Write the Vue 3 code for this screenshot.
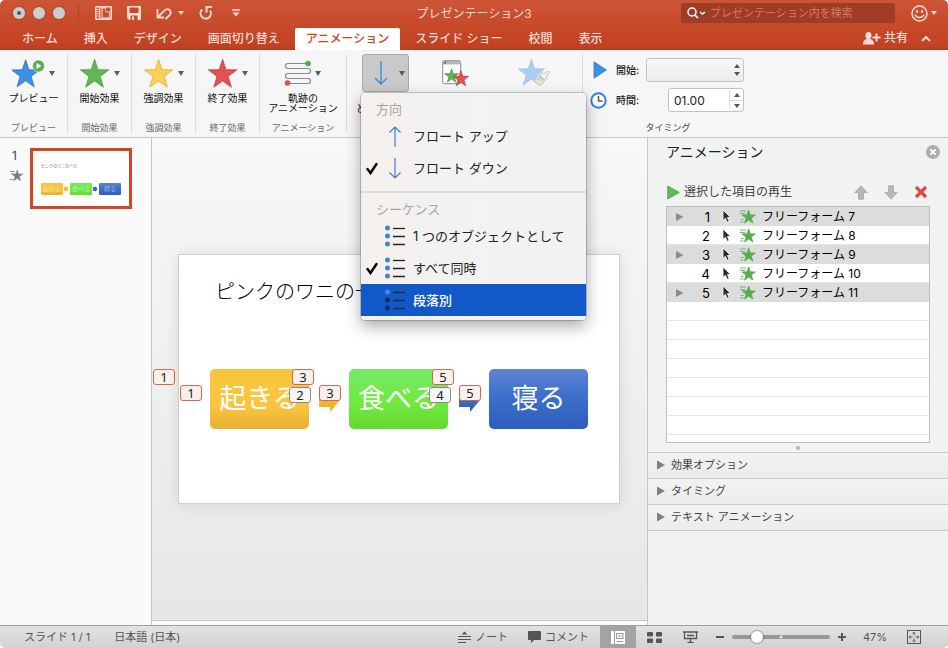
<script setup>
import { ref } from 'vue'

const star = '12,1 14.6,9 23,9.1 16.3,14.2 18.8,22.5 12,17.6 5.2,22.5 7.7,14.2 1,9.1 9.4,9'

const tabs = ['ホーム', '挿入', 'デザイン', '画面切り替え', 'アニメーション', 'スライド ショー', '校閲', '表示']
const activeTab = ref('アニメーション')

const effects = [
  { label: '開始効果', fill: '#62b657', edge: '#4a9c40' },
  { label: '強調効果', fill: '#fbd154', edge: '#e5b02f' },
  { label: '終了効果', fill: '#e35152', edge: '#c23c3e' },
]

const directions = [
  { label: 'フロート アップ', checked: false, d: 'M10 22V2M4.500 7.500 10 2l5.500 5.500' },
  { label: 'フロート ダウン', checked: true, d: 'M10 1v20M4.500 15.500 10 21l5.500-5.500' },
]
const sequences = [
  { label: '1 つのオブジェクトとして', checked: false },
  { label: 'すべて同時', checked: true },
  { label: '段落別', checked: false, active: true },
]

const animations = [
  { order: 1, name: 'フリーフォーム 7', group: true },
  { order: 2, name: 'フリーフォーム 8', group: false },
  { order: 3, name: 'フリーフォーム 9', group: true },
  { order: 4, name: 'フリーフォーム 10', group: false },
  { order: 5, name: 'フリーフォーム 11', group: true },
]

const sections = ['効果オプション', 'タイミング', 'テキスト アニメーション']

const shapes = [
  { text: '起きる', kind: 'gold', x: 31 },
  { text: '食べる', kind: 'green', x: 170 },
  { text: '寝る', kind: 'blue', x: 310 },
]
const connectors = [
  { kind: 'gold', x: 140, from: '#fcc83f', to: '#e5ae2e' },
  { kind: 'blue', x: 280, from: '#5a83d0', to: '#2a5cb8' },
]
const badges = [
  { n: 1, x: -26, y: 114 },
  { n: 1, x: 1, y: 130 },
  { n: 3, x: 113, y: 114 },
  { n: 2, x: 110, y: 132, plain: true },
  { n: 3, x: 140, y: 130 },
  { n: 5, x: 253, y: 114 },
  { n: 4, x: 250, y: 132, plain: true },
  { n: 5, x: 280, y: 130 },
]

const duration = ref('01.00')
const zoom = ref(22)
</script>

<template>
  <div class="window">
    <header class="titlebar">
      <div class="title-row">
        <div class="title-left">
          <div class="lights">
            <span class="light edited"></span><span class="light"></span><span class="light"></span>
          </div>
          <span class="title-rule"></span>
          <div class="quick">
            <button class="bare" aria-label="テーマ">
              <svg width="17" height="14" viewBox="0 0 17 14"><rect x=".8" y=".8" width="15.400" height="12.400" rx=".6" fill="none" stroke="#fbdcd3" stroke-width="1.600" /><path d="M4.800 1v12" stroke="#fbdcd3" stroke-width="1.200" /><path d="M2 3.500h1.800M2 5.700h1.800M2 7.900h1.800M2 10.100h1.800" stroke="#fbdcd3" /><path d="M6.500 1h4.500v4.500h4V13H6.500z" fill="#fbdcd3" /><path d="M7.500 2.500h3v3.800h3.800v5.200H7.500z" fill="#c8502f" /><path d="M11.800 2l2.700 2.800h-2.700z" fill="#c8502f" /></svg>
            </button>
            <button class="bare" aria-label="保存">
              <svg width="14" height="14" viewBox="0 0 14 14"><path d="M0 1q0-1 1-1h12q1 0 1 1v12q0 1-1 1H2l-2-2z" fill="#fbdcd3" /><path d="M2.500 1.500h9V7h-9z" fill="#c54a2b" /><path d="M3.500 9.500h7V14h-7z" fill="#c54a2b" /><path d="M5 10.500h2V14H5z" fill="#fbdcd3" /></svg>
            </button>
            <button class="bare undo" aria-label="元に戻す">
              <svg width="16" height="13" viewBox="0 0 16 13"><path d="M1.500 2v8.500H8M2 10L7.500 4.500C9.800 2 12 1.500 13.500 3c2 2 1.300 4-.2 5.500L9.500 12" fill="none" stroke="#fbdcd3" stroke-width="1.800" /></svg>
              <svg width="6" height="4" viewBox="0 0 6 4"><path d="M0 0h6L3 4z" fill="#fbdcd3" /></svg>
            </button>
            <button class="bare" aria-label="繰り返し">
              <svg width="14" height="14" viewBox="0 0 14 14"><path d="M3.300 3.500A5.200 5.200 0 1 0 11 4.500" fill="none" stroke="#fbdcd3" stroke-width="2" /><path d="M7.500 0v6.500M7 1h6" stroke="#fbdcd3" stroke-width="2" /></svg>
            </button>
            <button class="bare" aria-label="カスタマイズ">
              <svg width="10" height="8" viewBox="0 0 10 8"><path d="M1 1h8" stroke="#fbdcd3" stroke-width="1.500" /><path d="M1.500 3.500h7L5 7.500z" fill="#fbdcd3" /></svg>
            </button>
          </div>
        </div>
        <h1 class="doc-title">プレゼンテーション3</h1>
        <div class="title-right">
          <label class="search">
            <svg width="19" height="12" viewBox="0 0 19 12"><circle cx="5" cy="5" r="4" fill="none" stroke="#fff" stroke-width="1.500" /><path d="M8 8l3 3.300" stroke="#fff" stroke-width="1.700" /><path d="M13 5l2.500 2L18 5" fill="none" stroke="#fff" stroke-width="1.500" /></svg>
            <input type="search" placeholder="プレゼンテーション内を検索" aria-label="プレゼンテーション内を検索" />
          </label>
          <button class="bare smile" aria-label="フィードバック">
            <svg width="17" height="17" viewBox="0 0 17 17"><circle cx="8.500" cy="8.500" r="7.500" fill="none" stroke="#fbdcd3" stroke-width="1.500" /><ellipse cx="6" cy="6.500" rx="1" ry="1.500" fill="#fbdcd3" /><ellipse cx="11" cy="6.500" rx="1" ry="1.500" fill="#fbdcd3" /><path d="M4 9.500c1.500 4 7.500 4 9 0" fill="none" stroke="#fbdcd3" stroke-width="1.400" /></svg>
            <svg width="6" height="4" viewBox="0 0 6 4"><path d="M0 0h6L3 4z" fill="#fbdcd3" /></svg>
          </button>
        </div>
      </div>
      <div class="tab-row">
        <nav class="tabs">
          <button v-for="t in tabs" :key="t" class="tab" :class="{ active: t === activeTab }" @click="activeTab = t">{{ t }}</button>
        </nav>
        <div class="tab-actions">
          <button class="bare share">
            <svg width="18" height="13" viewBox="0 0 18 13"><ellipse cx="5.500" cy="3.500" rx="3" ry="3.500" fill="#fbdcd3" /><path d="M0 12.500c0-4 1.500-4.500 3.500-5.500h4c2 1 3.500 1.500 3.500 5.500z" fill="#fbdcd3" /><path d="M13.500 1.500v8M9.500 5.500h8" stroke="#fbdcd3" stroke-width="2" /></svg>
            共有
          </button>
          <button class="bare" aria-label="リボンを折りたたむ">
            <svg width="10" height="7" viewBox="0 0 10 7"><path d="M1 6l4-4 4 4" fill="none" stroke="#fbdcd3" stroke-width="2" /></svg>
          </button>
        </div>
      </div>
    </header>

    <section class="ribbon">
      <div class="group preview">
        <button class="big">
          <span class="glyph">
            <svg width="34" height="30" viewBox="0 0 34 30"><polygon transform="translate(-1.500 .5) scale(1.260)" :points="star" fill="#3f8fe8" stroke="#2f74c4" stroke-width=".7" /><circle cx="26.500" cy="8" r="6" fill="#58ad50" stroke="#f6f6f6" stroke-width=".6" /><path d="M24.500 5v6l5-3z" fill="#fff" /></svg>
            <i class="caret"></i>
          </span>
          <span class="label">プレビュー</span>
        </button>
        <span class="group-name">プレビュー</span>
      </div>
      <div v-for="e in effects" :key="e.label" class="group effect">
        <button class="big">
          <span class="glyph">
            <svg width="32" height="30" viewBox="0 0 32 30"><polygon transform="translate(0 0) scale(1.300)" :points="star" :fill="e.fill" :stroke="e.edge" stroke-width=".6" /></svg>
            <i class="caret"></i>
          </span>
          <span class="label">{{ e.label }}</span>
        </button>
        <span class="group-name">{{ e.label }}</span>
      </div>
      <div class="group path">
        <button class="big">
          <span class="glyph">
            <svg width="28" height="30" viewBox="0 0 28 30"><path d="M24 5.500H4a2.500 2.500 0 0 0 0 5h20a2.500 2.500 0 0 1 0 5H4a2.500 2.500 0 0 0 0 5h20a2.500 2.500 0 0 1 0 5H4" fill="none" stroke="#8b8b8b" stroke-width="1.200" /><circle cx="24" cy="5.500" r="2.800" fill="#55ab4e" /><circle cx="3.500" cy="25" r="2.800" fill="#df4f50" /></svg>
            <i class="caret"></i>
          </span>
          <span class="label">軌跡の<br />アニメーション</span>
        </button>
        <span class="group-name">アニメーション</span>
      </div>
      <div class="group options">
        <button class="option-button" aria-haspopup="menu" aria-expanded="true" aria-label="効果のオプション">
          <svg width="16" height="26" viewBox="0 0 16 26"><path d="M8 1v23M2 18l6 6 6-6" fill="none" stroke="#3a87d6" stroke-width="1.300" /></svg>
          <i class="caret"></i>
        </button>
        <span class="label clipped">と</span>
        <button class="bare pane-button" aria-label="アニメーション ウィンドウ">
          <svg width="28" height="28" viewBox="0 0 28 28"><rect x=".7" y=".7" width="18" height="23" rx="1.500" fill="#fff" stroke="#8b8b8b" /><path d="M1 4.500V2q0-1 1-1h15.500q1 0 1 1v2.500z" fill="#b5b5b5" /><rect x="2" y="1.800" width="2" height="1.600" fill="#555" /><polygon transform="translate(2 8) scale(.63)" :points="star" fill="#5cb152" stroke="#3f9438" /><polygon transform="translate(10.500 10) scale(.7)" :points="star" fill="#e35152" stroke="#b93a3c" /></svg>
        </button>
        <button class="bare painter-button" aria-label="アニメーションのコピー/貼り付け" disabled>
          <svg width="33" height="30" viewBox="0 0 33 30"><polygon transform="translate(-1 0) scale(1.200)" :points="star" fill="#abcdf0" stroke="#9bc0e8" stroke-width=".6" /><path d="M16 21l7-5 5 5-5 6c-3 0-6-2-7-6z" fill="#f7e2b4" stroke="#a9bccd" stroke-width=".8" /><path d="M17.500 21.500l6-4.500 3.500 3.500-2 2.500z" fill="#b9d3ee" /><path d="M21.500 16.500l2.500-2 1.700 1.300 4-2.300q2-.5 1.500 1.500l-3 4 .8 1.500-2 2z" fill="#f6f4f0" stroke="#b9b4ac" stroke-width=".8" /></svg>
        </button>

        <div class="menu" role="menu">
          <div class="menu-head">方向</div>
          <button v-for="m in directions" :key="m.label" class="menu-item" role="menuitemradio" :aria-checked="m.checked">
            <span class="check"><svg v-if="m.checked" width="13" height="13" viewBox="0 0 13 13"><path d="M1.500 7l3 4L10.500 2" fill="none" stroke="#000" stroke-width="2.400" stroke-linecap="round" /></svg></span>
            <svg width="20" height="23" viewBox="0 0 20 23"><path :d="m.d" fill="none" stroke="#4081cc" stroke-width="1.200" /></svg>
            <span>{{ m.label }}</span>
          </button>
          <hr class="menu-rule" />
          <div class="menu-head">シーケンス</div>
          <button v-for="m in sequences" :key="m.label" class="menu-item" :class="{ current: m.active }" role="menuitemradio" :aria-checked="m.checked">
            <span class="check"><svg v-if="m.checked" width="13" height="13" viewBox="0 0 13 13"><path d="M1.500 7l3 4L10.500 2" fill="none" stroke="#000" stroke-width="2.400" stroke-linecap="round" /></svg></span>
            <svg class="bullets" width="22" height="22" viewBox="0 0 22 22"><circle cx="2.500" cy="3" r="2.500" class="first" /><circle cx="2.500" cy="11" r="2.500" /><circle cx="2.500" cy="19" r="2.500" /><path d="M8 3.500h12" /><path d="M8 11.500h12M8 19.500h12" class="line" /></svg>
            <span>{{ m.label }}</span>
          </button>
        </div>
      </div>
      <div class="group timing">
        <div class="timing-row">
          <svg width="17" height="18" viewBox="0 0 17 18"><path d="M4 .8v16.400L16.500 9z" fill="#3f8fe8" stroke="#2f7bd2" stroke-width=".8" /></svg>
          <label for="start">開始:</label>
          <span class="select-box">
            <select id="start"><option></option></select>
            <i class="steps"><i></i><i></i></i>
          </span>
        </div>
        <div class="timing-row">
          <svg width="17" height="17" viewBox="0 0 17 17"><circle cx="8.500" cy="8.500" r="7.200" fill="#fff" stroke="#2f80d8" stroke-width="2" /><path d="M8.500 4v5h4" fill="none" stroke="#555" stroke-width="1.500" /></svg>
          <label for="duration">時間:</label>
          <span class="number-box">
            <input id="duration" v-model="duration" type="text" />
            <i class="steps"><i></i><i></i></i>
          </span>
        </div>
        <span class="group-name dark">タイミング</span>
      </div>
    </section>

    <main class="body">
      <aside class="thumbs">
        <div class="thumb-meta">
          <span>1</span>
          <svg width="13" height="12" viewBox="0 0 13 12"><polygon transform="translate(1.200 -.5) scale(.5)" :points="star" fill="#7d7d7d" stroke="#7d7d7d" /><path d="M0 1.500h5M1 4h3M0 9.500h3.500" stroke="#9b9b9b" /></svg>
        </div>
        <button class="thumb" aria-label="スライド 1">
          <span class="mini-title">ピンクのワニの一日</span>
          <span class="mini-flow">
            <span class="mini gold">起きる</span>
            <svg width="5" height="6" viewBox="0 0 5 6"><path d="M0 1h2.500V0l2 3-2 3V5H0z" fill="#f5bb35" /></svg>
            <span class="mini green">食べる</span>
            <svg width="5" height="6" viewBox="0 0 5 6"><path d="M0 1h2.500V0l2 3-2 3V5H0z" fill="#3668c4" /></svg>
            <span class="mini blue">寝る</span>
          </span>
        </button>
      </aside>

      <section class="editor">
        <div class="canvas">
          <div class="slide">
            <h2 class="slide-title">ピンクのワニの一日</h2>
            <div v-for="s in shapes" :key="s.text" class="shape" :class="s.kind" :style="{ left: s.x + 'px' }">{{ s.text }}</div>
            <svg v-for="c in connectors" :key="c.x" class="connector" :style="{ left: c.x + 'px' }" width="22" height="26" viewBox="0 0 22 26">
              <defs><linearGradient :id="'g-' + c.kind" x1="0" y1="0" x2="0" y2="1"><stop offset="0" :stop-color="c.from" /><stop offset="1" :stop-color="c.to" /></linearGradient></defs>
              <path d="M0 5h11V0l10.500 12.500L11 25v-5H0z" :fill="'url(#g-' + c.kind + ')'" />
            </svg>
            <span v-for="(b, i) in badges" :key="i" class="badge" :class="{ plain: b.plain }" :style="{ left: b.x + 'px', top: b.y + 'px' }">{{ b.n }}</span>
          </div>
        </div>
        <div class="notes-edge"></div>
      </section>

      <aside class="pane">
        <div class="pane-head">
          <h2>アニメーション</h2>
          <button class="bare" aria-label="閉じる">
            <svg width="14" height="14" viewBox="0 0 14 14"><circle cx="7" cy="7" r="7" fill="#adadad" /><path d="M4.300 4.300l5.400 5.400M9.700 4.300L4.300 9.700" stroke="#fff" stroke-width="1.800" /></svg>
          </button>
        </div>
        <div class="pane-tools">
          <button class="bare play">
            <svg width="13" height="15" viewBox="0 0 13 15"><path d="M.7 1v13L12.300 7.500z" fill="#65b65b" stroke="#4fa045" stroke-width=".8" /></svg>
            選択した項目の再生
          </button>
          <div class="moves">
            <button class="bare" aria-label="上へ移動"><svg width="14" height="15" viewBox="0 0 14 15"><path d="M7 .7l6.300 7H9.500v6.500h-5V7.700H.7z" fill="#b5b7b6" stroke="#a3a5a4" stroke-width=".7" /></svg></button>
            <button class="bare" aria-label="下へ移動"><svg width="14" height="15" viewBox="0 0 14 15"><path d="M7 14.300l6.300-7H9.500V.8h-5v6.500H.7z" fill="#b5b7b6" stroke="#a3a5a4" stroke-width=".7" /></svg></button>
            <button class="bare" aria-label="削除"><svg width="14" height="14" viewBox="0 0 14 14"><path d="M2 2l10 10M12 2L2 12" stroke="#d94a4b" stroke-width="3.200" /></svg></button>
          </div>
        </div>
        <div class="list">
          <table>
            <tbody>
              <tr v-for="a in animations" :key="a.order" :class="{ shaded: a.group }">
                <td class="c-tri"><svg v-if="a.group" width="8" height="10" viewBox="0 0 8 10"><path d="M0 1v8l7.500-4z" fill="#8b8b8b" /></svg></td>
                <td class="c-num">{{ a.order }}</td>
                <td class="c-cur"><svg width="10" height="15" viewBox="0 0 10 15"><path d="M1 1v10.500l2.400-2.200 1.800 4 2-.9-1.800-3.900H8.600z" fill="#2b2b2b" stroke="#fff" stroke-width=".8" /></svg></td>
                <td class="c-star"><svg width="16" height="14" viewBox="0 0 16 14"><polygon transform="translate(1.500 -.5) scale(.6)" :points="star" fill="#56ae4d" stroke="#56ae4d" stroke-width="1.500" /><path d="M0 1h6M0 3.500h5M1 9.500h2.500M0 12h3.500" stroke="#6fbb67" /></svg></td>
                <td class="c-name">{{ a.name }}</td>
              </tr>
            </tbody>
          </table>
        </div>
        <div class="grip"><i></i></div>
        <button v-for="s in sections" :key="s" class="section">
          <svg width="8" height="10" viewBox="0 0 8 10"><path d="M0 .5v9L8 5z" fill="#808080" /></svg>
          {{ s }}
        </button>
      </aside>
    </main>

    <footer class="status">
      <div class="status-left">
        <span>スライド 1 / 1</span>
        <span>日本語 (日本)</span>
      </div>
      <div class="status-right">
        <button class="bare text-button">
          <svg width="13" height="13" viewBox="0 0 13 13"><path d="M3.500 3.500L6.500.5l3 3z" fill="#555" /><path d="M0 5.500h13M0 8.500h13M0 11.500h8" stroke="#555" stroke-width="1.100" /></svg>
          ノート
        </button>
        <button class="bare text-button comment">
          <svg width="13" height="12" viewBox="0 0 13 12"><path d="M1 0h11q1 0 1 1v7q0 1-1 1H6l-3 3V9H1Q0 9 0 8V1q0-1 1-1z" fill="#555" /></svg>
          コメント
        </button>
        <button class="view on" aria-label="標準">
          <svg width="14" height="13" viewBox="0 0 14 13"><rect width="14" height="13" fill="#fff" /><path d="M3.500 0v13" stroke="#9d9d9d" /><path d="M5.500 2.500h6.500v5H5.500zM5.500 10.500H12M7 5h3.500" fill="none" stroke="#9d9d9d" stroke-width="1.100" /></svg>
        </button>
        <button class="view" aria-label="スライド一覧">
          <svg width="15" height="11" viewBox="0 0 15 11"><g fill="#555"><rect width="6" height="4.500" rx="1" /><rect x="9" width="6" height="4.500" rx="1" /><rect y="6.500" width="6" height="4.500" rx="1" /><rect x="9" y="6.500" width="6" height="4.500" rx="1" /></g></svg>
        </button>
        <button class="view" aria-label="スライド ショー">
          <svg width="15" height="12" viewBox="0 0 15 12"><path d="M0 1h15M1.500 1v6.500h12V1M4 4.500h7M7.500 7.500V11M4.500 11.300h6" fill="none" stroke="#555" stroke-width="1.300" /></svg>
        </button>
        <button class="step" aria-label="縮小"><svg width="8" height="8" viewBox="0 0 8 8"><path d="M0 4h8" stroke="#555" stroke-width="2" /></svg></button>
        <input v-model="zoom" class="zoom" type="range" min="0" max="100" aria-label="ズーム" />
        <button class="step" aria-label="拡大"><svg width="8" height="8" viewBox="0 0 8 8"><path d="M0 4h8M4 0v8" stroke="#555" stroke-width="2" /></svg></button>
        <span class="percent">47%</span>
        <button class="view" aria-label="ウィンドウに合わせる">
          <svg width="14" height="14" viewBox="0 0 14 14"><rect x=".5" y=".5" width="13" height="13" fill="none" stroke="#555" /><path d="M7 2v3.500M7 8.500V12M2 7h3.500M8.500 7H12M5.500 3.500L7 2l1.500 1.500M5.500 10.500L7 12l1.500-1.500M3.500 5.500L2 7l1.500 1.500M10.500 5.500L12 7l-1.500 1.500" fill="none" stroke="#555" stroke-width=".9" /></svg>
        </button>
      </div>
    </footer>
  </div>
</template>

<style>
body {
  margin: 0;
  background: #fff;
}
</style>

<style scoped>
* {
  box-sizing: border-box;
}
.window {
  display: flex;
  flex-direction: column;
  min-height: 100vh;
  overflow: hidden;
  border-radius: 5px;
  font-family: Inter, "Noto Sans CJK JP", sans-serif;
  font-size: 12px;
  line-height: 16px;
  color: #222;
}
button,
input,
select {
  font: inherit;
  color: inherit;
  margin: 0;
}
svg {
  display: block;
  flex: none;
}
.bare {
  display: flex;
  align-items: center;
  padding: 0;
  border: 0;
  background: none;
}
h1,
h2 {
  margin: 0;
  font-weight: 400;
}

.titlebar {
  background: linear-gradient(#cc5535, #c13f20);
  box-shadow: inset 0 -1px 0 #a93c22;
  color: #fbdcd3;
}
.title-row {
  display: grid;
  grid-template-columns: 1fr auto 1fr;
  align-items: center;
  height: 28px;
}
.title-left {
  display: flex;
  align-items: center;
  padding: 0 0 2px 13px;
}
.lights {
  display: flex;
  gap: 8px;
}
.light {
  display: grid;
  place-items: center;
  width: 12px;
  height: 12px;
  border-radius: 50%;
  background: #cdcdcd;
  box-shadow: 0 0 0 1px #a8523c;
}
.edited::after {
  content: "";
  width: 4px;
  height: 4px;
  border-radius: 50%;
  background: #555;
}
.title-rule {
  width: 1px;
  height: 16px;
  margin: 0 16px 0 13px;
  background: #a8452b;
}
.quick {
  display: flex;
  align-items: center;
  gap: 15px;
}
.undo {
  gap: 6px;
}
.undo + .bare {
  margin-right: 3px;
}
.doc-title {
  font-size: 12px;
}
.title-right {
  display: flex;
  justify-content: flex-end;
  align-items: center;
  gap: 16px;
  padding: 0 11px 2px 0;
}
.search {
  display: flex;
  align-items: center;
  gap: 4px;
  width: 214px;
  height: 20px;
  padding: 0 6px;
  border-radius: 3px;
  background: #9f3c25;
}
.search input {
  flex: 1;
  min-width: 0;
  padding: 0;
  border: 0;
  outline: 0;
  background: none;
  font-size: 11px;
}
.search input::placeholder {
  color: #d17a66;
  opacity: 1;
}
.smile {
  gap: 3px;
}
.tab-row {
  display: flex;
  justify-content: space-between;
  height: 22px;
}
.tabs {
  display: flex;
  padding-left: 9px;
}
.tab {
  padding: 0 13px;
  border: 0;
  background: none;
  font-weight: 500;
  white-space: nowrap;
}
.tab.active {
  margin: 0 2px;
  padding: 0 11px;
  border-radius: 2px 2px 0 0;
  background: #fff;
  color: #cb4425;
}
.tab-actions {
  display: flex;
  gap: 13px;
  padding: 0 17px 2px 0;
}
.share {
  gap: 3px;
  font-weight: 500;
}

.ribbon {
  display: flex;
  height: 88px;
  padding: 4px 0;
  border-bottom: 1px solid #c6c6c6;
  background: #f6f6f6;
}
.group {
  display: flex;
  flex-direction: column;
  align-items: center;
  flex: none;
  border-right: 1px solid #dcdcdc;
}
.preview {
  width: 68px;
}
.effect {
  width: 64px;
}
.path {
  width: 87px;
}
.big {
  display: flex;
  flex-direction: column;
  align-items: center;
  gap: 5px;
  padding: 4px 0 0;
  border: 0;
  background: none;
}
.glyph {
  display: flex;
  align-items: center;
  gap: 3px;
}
.caret {
  width: 0;
  border: 3px solid transparent;
  border-top: 5px solid #5b5b5b;
  border-bottom: 0;
}
.label {
  font-size: 10px;
  line-height: 10px;
  color: #111;
  white-space: nowrap;
}
.group-name {
  margin-top: auto;
  font-size: 9px;
  line-height: 11px;
  color: #666;
}
.options {
  position: relative;
  flex-direction: row;
  align-items: flex-start;
  width: 236px;
  padding-left: 15px;
}
.option-button {
  display: flex;
  align-items: center;
  justify-content: space-between;
  width: 47px;
  height: 38px;
  padding: 0 3px 0 10px;
  border: 1px solid #a8a8a8;
  border-radius: 3px;
  background: #c9c9c9;
}
.clipped {
  position: absolute;
  left: 9px;
  top: 49px;
}
.pane-button {
  margin: 6px 0 0 33px;
}
.painter-button {
  margin: 4px 0 0 48px;
}
.menu {
  position: absolute;
  z-index: 5;
  left: 14px;
  top: 39px;
  width: 225px;
  padding-bottom: 4px;
  border-radius: 4px;
  background: linear-gradient(90deg, #f5f0ee, #f1f3f2 60%);
  box-shadow: 0 0 0 1px rgba(0, 0, 0, 0.18), 0 6px 16px rgba(0, 0, 0, 0.35);
  font-size: 13px;
}
.menu-head {
  height: 27px;
  padding: 8px 15px 0;
  line-height: 16px;
  color: #a3a3a3;
}
.menu-item {
  display: grid;
  grid-template-columns: 24px 28px 1fr;
  align-items: center;
  width: 100%;
  height: 32px;
  padding: 0;
  border: 0;
  background: none;
  text-align: left;
}
.check {
  padding-left: 5px;
}
.bullets {
  fill: #4484c8;
  stroke: none;
}
.bullets path {
  stroke: #222;
  stroke-width: 1.3px;
}
.current {
  background: #1258c7;
  color: #fff;
  font-weight: 500;
}
.current .bullets {
  fill: #0c2d66;
}
.current .bullets .first {
  fill: #4a86d6;
}
.current .bullets .line {
  stroke: #0c2d66;
}
.menu-rule {
  height: 2px;
  margin: 7px 0 0;
  border: 0;
  background: #dbdddb;
}
.timing {
  width: 170px;
  align-items: stretch;
  gap: 6px;
  padding: 4px 7px 0;
  border-right: 0;
}
.timing-row {
  display: flex;
  align-items: center;
  height: 24px;
}
.timing-row label {
  margin-left: 9px;
  font-size: 10px;
  font-weight: 500;
  white-space: nowrap;
}
.timing .group-name {
  align-self: center;
  color: #444;
}
.select-box,
.number-box {
  display: flex;
  align-items: center;
  height: 24px;
  margin-left: auto;
  margin-right: 2px;
  border: 1px solid #c3c3c3;
  border-radius: 3px;
}
.select-box {
  width: 98px;
  background: linear-gradient(#f7f7f7, #ececec);
}
.number-box {
  width: 76px;
  background: #fff;
}
.select-box select,
.number-box input {
  appearance: none;
  flex: 1;
  min-width: 0;
  height: 22px;
  padding: 0 5px;
  border: 0;
  outline: 0;
  background: none;
}
.steps {
  display: flex;
  flex-direction: column;
  align-items: center;
  justify-content: center;
  gap: 4px;
  width: 12px;
}
.steps i {
  border: 3px solid transparent;
  border-top: 0;
  border-bottom: 4px solid #555;
}
.steps i + i {
  border-top: 4px solid #555;
  border-bottom: 0;
}
.number-box .steps {
  gap: 7px;
  width: 14px;
  height: 18px;
  border-left: 1px solid #ddd;
  background: linear-gradient(#ddd, #ddd) center / 100% 1px no-repeat;
}

.body {
  display: flex;
  flex: 1;
}
.thumbs {
  display: flex;
  align-items: flex-start;
  flex: none;
  width: 152px;
  padding: 10px 0 0 10px;
  border-right: 1px solid #c6c6c6;
  background: #fafafa;
}
.thumb-meta {
  display: flex;
  flex-direction: column;
  gap: 6px;
  width: 13px;
  margin-right: 7px;
  color: #444;
}
.thumb-meta span {
  padding-left: 2px;
}
.thumb {
  display: block;
  width: 102px;
  height: 61px;
  padding: 6px 8px;
  border: 3px solid #d14527;
  background: #fff;
  text-align: left;
}
.mini-title {
  display: block;
  height: 20px;
  font-size: 4px;
  line-height: 7px;
  color: #777;
}
.mini-flow {
  display: flex;
  align-items: center;
  justify-content: space-between;
}
.mini {
  width: 22px;
  height: 12px;
  border-radius: 1px;
  font-size: 6px;
  line-height: 12px;
  text-align: center;
  color: rgba(255, 255, 255, 0.5);
}
.gold {
  background: linear-gradient(#f9c33c, #fac640 60%, #e5b035);
}
.green {
  background: linear-gradient(#76e86a, #70ea40 55%, #66d832);
}
.blue {
  background: linear-gradient(#5e86d0, #3d6fcc 45%, #2b5db9);
}

.editor {
  display: flex;
  flex-direction: column;
  flex: 1;
  min-width: 0;
}
.canvas {
  display: grid;
  place-items: center;
  flex: 1;
  padding-right: 1px;
  background: linear-gradient(#f8f8f8, #e7e7e7);
}
.notes-edge {
  height: 5px;
  border-top: 1px solid #c6c6c6;
  background: #fafafa;
}
.slide {
  position: relative;
  width: 442px;
  height: 250px;
  border: 1px solid #cfcfcf;
  background: #fff;
  box-shadow: 0 1px 14px rgba(0, 0, 0, 0.1);
}
.slide-title {
  padding: 27px 36px;
  font-size: 20px;
  font-weight: 300;
  line-height: 20px;
  color: #000;
}
.shape {
  position: absolute;
  top: 114px;
  display: grid;
  place-items: center;
  width: 99px;
  height: 60px;
  border-radius: 5px;
  font-size: 27px;
  line-height: 60px;
  color: #fff;
}
.connector {
  position: absolute;
  top: 132px;
}
.badge {
  position: absolute;
  display: grid;
  place-items: center;
  width: 22px;
  height: 16px;
  border: 1px solid #d4674c;
  border-radius: 3px;
  background: #fbf0ee;
  font-family: "Noto Sans", sans-serif;
  font-size: 13px;
  line-height: 14px;
  color: #222;
}
.badge.plain {
  border-color: #8a8a8a;
  background: #f6f6f6;
}

.pane {
  display: flex;
  flex-direction: column;
  flex: none;
  width: 301px;
  border-left: 1px solid #c6c6c6;
  background: #f1f3f2;
}
.pane-head {
  display: flex;
  align-items: center;
  justify-content: space-between;
  height: 28px;
  padding: 0 8px 0 18px;
}
.pane-head h2 {
  font-size: 14px;
}
.pane-tools {
  display: flex;
  align-items: center;
  justify-content: space-between;
  height: 40px;
  padding: 12px 20px 0 19px;
}
.play {
  gap: 4px;
  color: #444;
}
.moves {
  display: flex;
  align-items: center;
  gap: 16px;
}
.list {
  min-height: 237px;
  margin: 0 18px;
  border: 1px solid #bfbfbf;
  background: repeating-linear-gradient(#fff 0 18px, #e6e6e6 18px 19px);
}
.list table {
  width: 100%;
  border-collapse: collapse;
  table-layout: fixed;
  color: #000;
}
.list td {
  height: 19px;
  padding: 0;
  line-height: 18px;
}
.shaded td {
  background: #dcdcdc;
}
.c-tri {
  width: 26px;
}
.c-tri svg {
  margin-left: 9px;
}
.c-num {
  width: 17px;
  font-size: 13px;
  text-align: right;
}
.c-cur {
  width: 30px;
}
.c-cur svg {
  margin-left: 12px;
}
.c-star {
  width: 22px;
}
.grip {
  display: grid;
  place-items: center;
  height: 9px;
}
.grip i {
  width: 4px;
  height: 4px;
  border-radius: 50%;
  background: #b5b5b5;
}
.section {
  display: flex;
  align-items: center;
  gap: 6px;
  height: 26px;
  padding: 0 9px 1px;
  border: 0;
  border-top: 1px solid #c9c9c9;
  background: linear-gradient(#f2f2f2, #ececec);
  font-size: 11px;
  color: #444;
}
.section:last-child {
  height: 27px;
  border-bottom: 1px solid #c9c9c9;
}

.status {
  display: flex;
  justify-content: space-between;
  height: 23px;
  border-top: 1px solid #9da19e;
  background: linear-gradient(#e2e2e2, #d2d2d2);
  font-size: 11px;
  color: #555;
}
.status-left,
.status-right {
  display: flex;
  align-items: center;
}
.status-left {
  gap: 24px;
  padding-left: 24px;
}
.status-right {
  padding-right: 16px;
}
.text-button {
  gap: 4px;
}
.comment {
  margin: 0 11px 0 20px;
}
.view,
.step {
  display: grid;
  place-items: center;
  align-self: stretch;
  padding: 0;
  border: 0;
  background: none;
}
.view {
  width: 36px;
}
.view.on {
  background: #a3a3a3;
}
.step {
  width: 24px;
}
.zoom {
  appearance: none;
  width: 98px;
  height: 4px;
  border-radius: 2px;
  background: radial-gradient(circle, #ddd 0 1px, transparent 2px), #989898;
}
.zoom::-webkit-slider-thumb {
  appearance: none;
  width: 12px;
  height: 12px;
  border-radius: 50%;
  background: #fff;
  box-shadow: 0 0 1px 1px rgba(0, 0, 0, 0.25);
}
.percent {
  width: 42px;
  font-size: 11px;
  text-align: center;
}
</style>
